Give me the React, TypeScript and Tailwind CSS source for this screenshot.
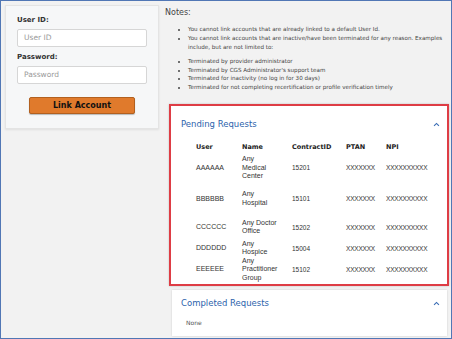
const rows = [
  { user: "AAAAAA", name: ["Any", "Medical", "Center"], contract: "15201", h: "h-[30px]" },
  { user: "BBBBBB", name: ["Any", "Hospital"], contract: "15101", h: "h-[32px]" },
  { user: "CCCCCC", name: ["Any Doctor", "Office"], contract: "15202", h: "h-[25px]" },
  { user: "DDDDDD", name: ["Any", "Hospice"], contract: "15004", h: "h-[17px]" },
  { user: "EEEEEE", name: ["Any", "Practitioner", "Group"], contract: "15102", h: "h-[25px]" },
];

const Chevron = () => (
  <svg className="w-[7px] h-[5px] text-[#3a6db5]" viewBox="0 0 10 6" fill="none">
    <path d="M1.5 5L5 1.5L8.5 5" stroke="currentColor" strokeWidth="1.6" />
  </svg>
);

const App = () => {
  return (
    <div className="w-[452px] h-[339px] border-[1.5px] border-[#5177b5] bg-[#f2f2f2] flex overflow-hidden font-['DejaVu_Sans',sans-serif]">
      {/* Link account form */}
      <div className="pt-[4px] pl-[4px] shrink-0">
        <div className="w-[154px] h-[124px] bg-[#f6f7f8] border border-[#e4e4e4] shadow-[0_1px_2px_rgba(0,0,0,0.08)] px-[11px] pt-[9px]">
          <div className="text-[7px] leading-[10px] font-bold text-[#333]">User ID:</div>
          <div className="mt-[4px] h-[18px] bg-white border border-[#d6d6d6] rounded-[2px] px-[6px] flex items-center text-[7.5px] text-[#9a9a9a]">
            User ID
          </div>
          <div className="mt-[5px] text-[7px] leading-[10px] font-bold text-[#333]">Password:</div>
          <div className="mt-[4px] h-[18px] bg-white border border-[#d6d6d6] rounded-[2px] px-[6px] flex items-center text-[7.5px] text-[#9a9a9a]">
            Password
          </div>
          <div className="mt-[13px] mx-auto w-[106px] h-[17px] bg-[#e07a2c] border border-[#b2601f] rounded-[2px] shadow-[0_1px_1px_rgba(0,0,0,0.25)] flex items-center justify-center text-[8px] font-bold text-[#111]">
            Link Account
          </div>
        </div>
      </div>

      {/* Notes and requests */}
      <div className="flex-1 flex flex-col pl-[6px] pr-[2px]">
        <div className="pt-[6px] text-[#444]">
          <div className="text-[8px]">Notes:</div>
          <ul className="mt-[6px] ml-[14px] list-disc pl-[9px] text-[5.6px] leading-[9px]">
            <li>You cannot link accounts that are already linked to a default User Id.</li>
            <li>
              You cannot link accounts that are inactive/have been terminated for any reason. Examples include, but
              are not limited to:
            </li>
          </ul>
          <ul className="mt-[5px] ml-[14px] list-disc pl-[9px] text-[5.6px] leading-[8.6px]">
            <li>Terminated by provider administrator</li>
            <li>Terminated by CGS Administrator's support team</li>
            <li>Terminated for inactivity (no log in for 30 days)</li>
            <li>Terminated for not completing recertification or profile verification timely</li>
          </ul>
        </div>

        {/* Pending requests */}
        <div className="mt-[13px] ml-[4px] border-2 border-[#de3d45] shadow-[0_0_2px_rgba(0,0,0,0.2)] bg-white p-[2px]">
          <div className="bg-white pl-[8px] pr-[5px] pt-[10px]">
            <div className="flex items-center justify-between">
              <span className="text-[8.5px] text-[#2c63ac]">Pending Requests</span>
              <Chevron />
            </div>
            <div className="mt-[12px] ml-[15px] grid grid-cols-[46px_50px_54px_40px_1fr] text-[6.5px] font-bold text-[#222]">
              <span>User</span>
              <span>Name</span>
              <span>ContractID</span>
              <span>PTAN</span>
              <span>NPI</span>
            </div>
            <div className="ml-[15px] font-['Liberation_Sans',sans-serif] text-[7px] text-[#333]">
              {rows.map((r) => (
                <div key={r.user} className={`grid grid-cols-[46px_50px_54px_40px_1fr] items-center ${r.h}`}>
                  <span>{r.user}</span>
                  <div className="leading-[8.5px]">
                    {r.name.map((n) => (
                      <div key={n}>{n}</div>
                    ))}
                  </div>
                  <span className="text-[6.5px]">{r.contract}</span>
                  <span className="text-[6.5px] tracking-[-0.2px]">XXXXXXX</span>
                  <span className="text-[6.5px] tracking-[-0.2px]">XXXXXXXXXX</span>
                </div>
              ))}
            </div>
          </div>
        </div>

        {/* Completed requests */}
        <div className="mt-[4px] ml-[7px] mr-[2px] bg-white shadow-[0_0_2px_rgba(0,0,0,0.15)] pl-[9px] pr-[7px] pt-[7px] h-[46px]">
          <div className="flex items-center justify-between">
            <span className="text-[8.5px] text-[#2c63ac]">Completed Requests</span>
            <Chevron />
          </div>
          <div className="mt-[8px] ml-[5px] text-[6px] text-[#555]">None</div>
        </div>
      </div>
    </div>
  );
};

export default App;
